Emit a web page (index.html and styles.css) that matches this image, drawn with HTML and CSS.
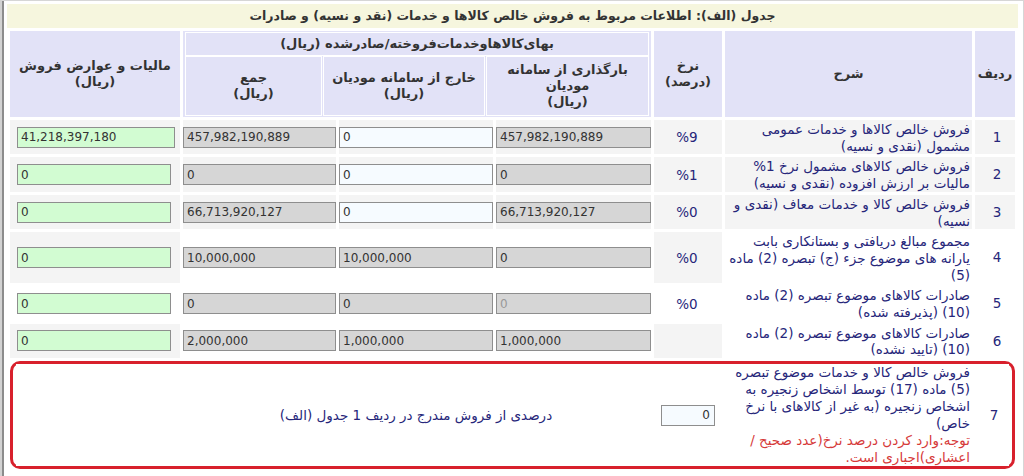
FILE: index.html
```html
<!DOCTYPE html>
<html lang="fa" dir="rtl">
<head>
<meta charset="utf-8">
<title>جدول (الف)</title>
<link rel="stylesheet" href="styles.css">
</head>
<body>
<div class="frame">
  <div class="inner">
    <div class="title">جدول (الف): اطلاعات مربوط به فروش خالص کالاها و خدمات (نقد و نسیه) و صادرات</div>
    <table class="grid">
      <colgroup>
        <col class="c-no"><col class="c-desc"><col class="c-rate"><col class="c-up"><col class="c-out"><col class="c-sum"><col class="c-tax">
      </colgroup>
      <thead>
        <tr>
          <th>ردیف</th>
          <th>شرح</th>
          <th>نرخ<br>(درصد)</th>
          <th colspan="3" class="grp">
            <table class="sub">
              <colgroup><col class="s-up"><col class="s-out"><col class="s-sum"></colgroup>
              <tr><th colspan="3" class="sub-title">بهای‌کالاهاوخدمات‌فروخته/صادرشده (ریال)</th></tr>
              <tr class="sub-row">
                <th>بارگذاری از سامانه مودیان<br>(ریال)</th>
                <th>خارج از سامانه مودیان<br>(ریال)</th>
                <th>جمع<br>(ریال)</th>
              </tr>
            </table>
          </th>
          <th>مالیات و عوارض فروش<br>(ریال)</th>
        </tr>
      </thead>
      <tbody>
        <tr class="shade">
          <td class="no">1</td>
          <td class="desc">فروش خالص کالاها و خدمات عمومی مشمول (نقدی و نسیه)</td>
          <td class="rate">%9</td>
          <td class="val"><input class="in ro" value="457,982,190,889" readonly></td>
          <td class="val"><input class="in ed" value="0"></td>
          <td class="val"><input class="in ro" value="457,982,190,889" readonly></td>
          <td class="tax"><input class="in tx wide" value="41,218,397,180"></td>
        </tr>
        <tr class="shade">
          <td class="no">2</td>
          <td class="desc">فروش خالص کالاهای مشمول نرخ 1% مالیات بر ارزش افزوده (نقدی و نسیه)</td>
          <td class="rate">%1</td>
          <td class="val"><input class="in ro" value="0" readonly></td>
          <td class="val"><input class="in ed" value="0"></td>
          <td class="val"><input class="in ro" value="0" readonly></td>
          <td class="tax"><input class="in tx" value="0"></td>
        </tr>
        <tr class="shade">
          <td class="no">3</td>
          <td class="desc">فروش خالص کالا و خدمات معاف (نقدی و نسیه)</td>
          <td class="rate">%0</td>
          <td class="val"><input class="in ro" value="66,713,920,127" readonly></td>
          <td class="val"><input class="in ed" value="0"></td>
          <td class="val"><input class="in ro" value="66,713,920,127" readonly></td>
          <td class="tax"><input class="in tx" value="0"></td>
        </tr>
        <tr>
          <td class="no">4</td>
          <td class="desc">مجموع مبالغ دریافتی و بستانکاری بابت یارانه های موضوع جزء (ج) تبصره (2) ماده (5)</td>
          <td class="rate">%0</td>
          <td class="val"><input class="in ro" value="0" readonly></td>
          <td class="val"><input class="in ro" value="10,000,000" readonly></td>
          <td class="val"><input class="in ro" value="10,000,000" readonly></td>
          <td class="tax"><input class="in tx" value="0"></td>
        </tr>
        <tr class="plain">
          <td class="no">5</td>
          <td class="desc">صادرات کالاهای موضوع تبصره (2) ماده (10) (پذیرفته شده)</td>
          <td class="rate">%0</td>
          <td class="val"><input class="in ro dis" value="0" disabled></td>
          <td class="val"><input class="in ro" value="0" readonly></td>
          <td class="val"><input class="in ro" value="0" readonly></td>
          <td class="tax"><input class="in tx" value="0"></td>
        </tr>
        <tr>
          <td class="no">6</td>
          <td class="desc">صادرات کالاهای موضوع تبصره (2) ماده (10) (تایید نشده)</td>
          <td class="rate"></td>
          <td class="val"><input class="in ro" value="1,000,000" readonly></td>
          <td class="val"><input class="in ro" value="1,000,000" readonly></td>
          <td class="val"><input class="in ro" value="2,000,000" readonly></td>
          <td class="tax"><input class="in tx" value="0"></td>
        </tr>
      </tbody>
    </table>
    <div class="special">
      <table class="grid g7">
        <colgroup>
          <col class="c-no7"><col class="c-desc"><col class="c-rate"><col class="c-grp"><col class="c-tax7">
        </colgroup>
        <tr>
          <td class="no">7</td>
          <td class="desc">فروش خالص کالا و خدمات موضوع تبصره (5) ماده (17) توسط اشخاص زنجیره به اشخاص زنجیره (به غیر از کالاهای با نرخ خاص)<br><span class="note">توجه:وارد کردن درصد نرخ(عدد صحیح / اعشاری)اجباری است.</span></td>
          <td class="rate7"><input class="in pct" value="0"></td>
          <td class="grp7">درصدی از فروش مندرج در ردیف 1 جدول (الف)</td>
          <td></td>
        </tr>
      </table>
    </div>
  </div>
</div>
</body>
</html>
```

FILE: styles.css
```css
html, body {
  margin: 0;
  padding: 0;
  background: #ffffff;
}

body {
  font-family: "DejaVu Sans", "Noto Sans", sans-serif;
  font-size: 13px;
  color: #333333;
}

.frame {
  direction: rtl;
  height: 476px;
  box-sizing: border-box;
  border-top: 1px solid #d6d6d6;
  border-left: 2px solid #d2d2d2;
  border-right: 1px solid #d6d6d6;
}

.inner {
  height: 100%;
  box-sizing: border-box;
  border-left: 2px solid #8c8c8c;
  padding: 3px 5px 0 3px;
}

.title {
  height: 24px;
  line-height: 24px;
  background: #f6f6de;
  text-align: center;
  font-weight: bold;
  font-size: 12.5px;
  color: #333333;
}

.grid {
  width: 100%;
  table-layout: fixed;
  border-collapse: separate;
  border-spacing: 3px;
}

.c-no { width: 40px; }
.c-desc { width: 247px; }
.c-rate { width: 68px; }
.c-up { width: 155px; }
.c-out { width: 154px; }
.c-sum { width: 153px; }
.c-tax { width: 170px; }

.grid > thead > tr > th {
  background: #e2e2f7;
  height: 86px;
  padding: 0;
  font-weight: bold;
  font-size: 13px;
  line-height: 16px;
  color: #333333;
  text-align: center;
  vertical-align: middle;
}

.grid > thead > tr > th.grp {
  background: #ffffff;
  vertical-align: top;
}

.sub {
  width: 100%;
  table-layout: fixed;
  border-collapse: separate;
  border-spacing: 3px 2px;
  background: #e2e2f7;
  margin: 0;
}

.s-up { width: 161px; }
.s-out { width: 160px; }

.sub th {
  background: #e2e2f7;
  padding: 0 2px;
  font-weight: bold;
  font-size: 13px;
  line-height: 16px;
  color: #333333;
  text-align: center;
  box-shadow: 0 0 0 1px #ffffff;
}

.sub-title {
  height: 22px;
  font-size: 13.5px;
}

.sub-row th {
  height: 58px;
}

.grid td {
  padding: 1px 2px 0 0;
  font-size: 13.5px;
  line-height: 16.7px;
  color: #26267a;
  vertical-align: middle;
  background: #ffffff;
}

.grid td.rate,
.grid td.tax,
.grid tr.shade td {
  background: #f4f4f4;
}

.grid td.val {
  padding: 0;
}

.grid tr.plain td {
  background: #ffffff;
}

.grid td.no {
  text-align: center;
  padding: 0 0 0 4px;
}

.grid td.desc {
  text-align: right;
}

.grid td.rate {
  text-align: center;
}

.grid td.tax {
  text-align: left;
  padding: 0 0 0 7px;
}

.in {
  box-sizing: border-box;
  height: 21px;
  width: 100%;
  margin: 0;
  padding: 0 3px;
  border: 1px solid #8e8e8e;
  font-family: "DejaVu Sans", sans-serif;
  font-size: 12px;
  color: #333333;
  direction: ltr;
  text-align: left;
  vertical-align: middle;
  outline: none;
  border-radius: 0;
}

.in.ro {
  background: #d6d6d6;
}

.in.dis {
  color: #999999;
}

.in.ed {
  background: #f6fbff;
}

.in.tx {
  background: #d2fcd2;
  width: 154px;
}

.in.tx.wide {
  width: 158px;
}

.special {
  margin: 0 3px 0 3px;
  border: 3px solid #d8202c;
  border-radius: 10px;
}

.g7 {
  border-spacing: 3px 0;
}

.c-no7 { width: 34px; }
.c-grp { width: 468px; }
.c-tax7 { width: 164px; }

.g7 td {
  background: #ffffff;
  padding: 0 2px 0 0;
  line-height: 17px;
}

.g7 td.rate7 {
  text-align: center;
  padding: 0;
  background: #ffffff;
}

.g7 td.grp7 {
  text-align: center;
}

.in.pct {
  width: 54px;
  background: #f6fbff;
  text-align: right;
  padding: 0 4px;
}

.note {
  color: #d63a3a;
}
```
